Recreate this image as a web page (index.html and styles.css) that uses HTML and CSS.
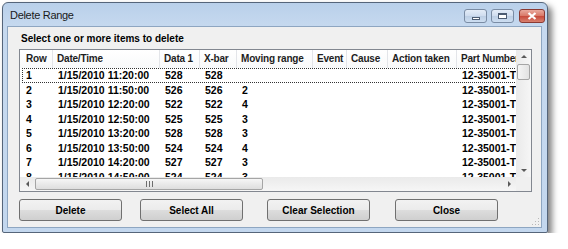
FILE: index.html
```html
<!DOCTYPE html>
<html>
  <head>
    <title>Delete Range</title>
    <link rel="stylesheet" href="styles.css">
  </head>

  <body>
    <div class="window">
      <div class="titlebar">
        <span class="title">Delete Range</span>
        <div class="caption-buttons">
          <div class="cap-btn cap-min"><span class="glyph-min"></span></div>
          <div class="cap-btn cap-max"><span class="glyph-max"></span></div>
          <div class="cap-btn cap-close">
            <svg width="10" height="8" viewBox="0 0 10 8">
              <path d="M1.5 1 L8.5 7 M8.5 1 L1.5 7" stroke="#fff" stroke-width="2.2" />
            </svg>
          </div>
        </div>
      </div>

      <div class="client">
        <span class="prompt">Select one or more items to delete</span>

        <div class="listview">
          <div class="list-main">
            <div class="list-header cols">
              <span>Row</span>
              <span>Date/Time</span>
              <span>Data 1</span>
              <span>X-bar</span>
              <span>Moving range</span>
              <span>Event</span>
              <span>Cause</span>
              <span>Action taken</span>
              <span>Part Number</span>
            </div>
            <div class="list-row cols focused">
              <span>1</span><span>1/15/2010 11:20:00</span><span>528</span><span>528</span><span></span><span></span><span></span><span></span><span>12-35001-T</span>
            </div>
            <div class="list-row cols">
              <span>2</span><span>1/15/2010 11:50:00</span><span>526</span><span>526</span><span>2</span><span></span><span></span><span></span><span>12-35001-T</span>
            </div>
            <div class="list-row cols">
              <span>3</span><span>1/15/2010 12:20:00</span><span>522</span><span>522</span><span>4</span><span></span><span></span><span></span><span>12-35001-T</span>
            </div>
            <div class="list-row cols">
              <span>4</span><span>1/15/2010 12:50:00</span><span>525</span><span>525</span><span>3</span><span></span><span></span><span></span><span>12-35001-T</span>
            </div>
            <div class="list-row cols">
              <span>5</span><span>1/15/2010 13:20:00</span><span>528</span><span>528</span><span>3</span><span></span><span></span><span></span><span>12-35001-T</span>
            </div>
            <div class="list-row cols">
              <span>6</span><span>1/15/2010 13:50:00</span><span>524</span><span>524</span><span>4</span><span></span><span></span><span></span><span>12-35001-T</span>
            </div>
            <div class="list-row cols">
              <span>7</span><span>1/15/2010 14:20:00</span><span>527</span><span>527</span><span>3</span><span></span><span></span><span></span><span>12-35001-T</span>
            </div>
            <div class="list-row cols">
              <span>8</span><span>1/15/2010 14:50:00</span><span>524</span><span>524</span><span>3</span><span></span><span></span><span></span><span>12-35001-T</span>
            </div>
          </div>

          <div class="vscroll">
            <div class="arrow arrow-up"></div>
            <div class="vthumb"></div>
            <div class="vtrack"></div>
            <div class="arrow arrow-down"></div>
          </div>

          <div class="hscroll">
            <div class="arrow arrow-left"></div>
            <div class="hthumb"><span class="grip-lines"></span></div>
            <div class="htrack"></div>
            <div class="arrow arrow-right"></div>
          </div>

          <div class="corner"></div>
        </div>

        <div class="buttons">
          <button class="btn">Delete</button>
          <button class="btn btn-select">Select All</button>
          <button class="btn btn-clear">Clear Selection</button>
          <button class="btn btn-close">Close</button>
        </div>

        <svg class="size-grip" width="10" height="10" viewBox="0 0 10 10">
          <rect x="8" y="2" width="1" height="1" fill="#b8b8b8" />
          <rect x="5" y="5" width="1" height="1" fill="#b8b8b8" />
          <rect x="8" y="5" width="1" height="1" fill="#b8b8b8" />
          <rect x="2" y="8" width="1" height="1" fill="#b8b8b8" />
          <rect x="5" y="8" width="1" height="1" fill="#b8b8b8" />
          <rect x="8" y="8" width="1" height="1" fill="#b8b8b8" />
        </svg>
      </div>
    </div>
  </body>
</html>
```

FILE: styles.css
```css
body {
  margin: 0;
  background: #fff;
  font-family: "Liberation Sans", Arial, sans-serif;
  color: #000;
}

.window {
  margin: 2px 0 0 2px;
  width: 546px;
  height: 231px;
  box-sizing: border-box;
  border: 1px solid #55657a;
  border-radius: 6px 6px 2px 2px;
  background: linear-gradient(#b9d0ea, #c6d9ef 24px, #c3d7ee);
  box-shadow: 4px 4px 6px rgba(0, 0, 0, 0.5);
  display: flex;
  flex-direction: column;
}

/* title bar */

.titlebar {
  height: 23px;
  display: flex;
  align-items: center;
  padding-left: 7px;
}

.title {
  font-size: 11px;
  letter-spacing: -0.3px;
  color: #1a1a1a;
  margin-top: 1px;
}

.caption-buttons {
  margin-left: auto;
  margin-right: 2px;
  align-self: flex-start;
  margin-top: 6px;
  display: flex;
  gap: 4px;
}

.cap-btn {
  width: 23px;
  height: 14px;
  box-sizing: border-box;
  border: 1px solid #7a8ca4;
  border-radius: 3px;
  background: linear-gradient(#e3ecf7, #cedcee 50%, #bccee4 51%, #cddef1);
  display: flex;
  align-items: center;
  justify-content: center;
}

.cap-close {
  width: 26px;
  margin-left: 1px;
  border-color: #8a3a33;
  background: linear-gradient(#e9a99d, #d87766 50%, #c7493a 51%, #d8816f);
}

.glyph-min {
  width: 8px;
  height: 3px;
  margin-top: 4px;
  background: #fff;
  border: 1px solid #4c5c72;
  box-sizing: border-box;
}

.glyph-max {
  width: 9px;
  height: 6px;
  border: 1px solid #4c5c72;
  box-sizing: border-box;
  border-top-width: 2px;
  background: #fff;
}

/* client area */

.client {
  position: relative;
  margin: 0 5px 4px 4px;
  flex: 1;
  background: #f0f0f0;
  border: 1px solid #8ea6c1;
  display: flex;
  flex-direction: column;
  align-items: flex-start;
}

.prompt {
  margin: 5px 0 0 13px;
  font-size: 10px;
  font-weight: bold;
  line-height: 14px;
}

/* list view */

.listview {
  margin: 3px 0 0 11px;
  width: 513px;
  height: 143px;
  box-sizing: border-box;
  border: 1px solid #828790;
  background: #fff;
  display: grid;
  grid-template-columns: 496px 15px;
  grid-template-rows: 127px 14px;
}

.list-main {
  overflow: hidden;
}

.cols {
  display: grid;
  grid-template-columns: 33px 107px 40px 37px 76px 34px 41px 69px 80px;
  width: 517px;
}

.cols span {
  white-space: nowrap;
  overflow: hidden;
  padding-left: 5px;
}

.list-header {
  height: 18px;
  background: linear-gradient(#fff, #f8f9fa);
  font-size: 10px;
  font-weight: bold;
  letter-spacing: -0.2px;
  line-height: 17px;
  color: #1e1e1e;
}

.list-header span {
  border-right: 1px solid #e3e5e9;
  padding-left: 4px;
}

.list-header span:first-child {
  padding-left: 6px;
}

.list-row {
  position: relative;
  height: 14.5px;
  font-size: 10.5px;
  font-weight: bold;
  line-height: 14.5px;
}

.list-row span:first-child {
  padding-left: 6px;
}

.focused::after {
  content: "";
  position: absolute;
  left: 2px;
  right: 0;
  top: 0;
  bottom: 0;
  border: 1px dotted #333;
}

/* scroll bars */

.vscroll {
  display: flex;
  flex-direction: column;
  background: linear-gradient(90deg, #eaeaea, #f6f6f6);
}

.vtrack {
  flex: 1;
}

.vthumb {
  height: 14px;
  margin: 0 1px;
  border: 1px solid #a5a5a5;
  border-radius: 2px;
  background: linear-gradient(90deg, #f5f5f5, #e2e2e2);
}

.hscroll {
  display: flex;
  align-items: stretch;
  background: linear-gradient(#eaeaea, #f6f6f6);
}

.htrack {
  flex: 1;
}

.hthumb {
  width: 226px;
  margin: 1px 0;
  border: 1px solid #a5a5a5;
  border-radius: 2px;
  background: linear-gradient(#f6f6f6, #dedede);
  display: flex;
  align-items: center;
  justify-content: center;
}

.grip-lines {
  width: 7px;
  height: 6px;
  background: repeating-linear-gradient(90deg, #6e6e6e 0 1px, transparent 1px 3px);
}

.corner {
  background: #f0f0f0;
}

.arrow {
  width: 15px;
  height: 14px;
  position: relative;
  flex-shrink: 0;
}

.arrow::before {
  content: "";
  position: absolute;
  left: 50%;
  top: 50%;
  width: 0;
  height: 0;
  border: 3px solid transparent;
}

.arrow-up::before {
  border-bottom-color: #5a5a5a;
  margin: -5px 0 0 -3px;
}

.arrow-down::before {
  border-top-color: #5a5a5a;
  margin: -1px 0 0 -3px;
}

.arrow-left::before {
  border-right-color: #5a5a5a;
  margin: -3px 0 0 -5px;
}

.arrow-right::before {
  border-left-color: #5a5a5a;
  margin: -3px 0 0 -1px;
}

/* push buttons */

.buttons {
  display: flex;
  margin: 7px 0 0 11px;
}

.btn {
  width: 103px;
  height: 22px;
  border: 1px solid #707070;
  border-radius: 3px;
  background: linear-gradient(#f2f2f2, #ebebeb 50%, #dddddd 51%, #cfcfcf);
  font-family: "Liberation Sans", Arial, sans-serif;
  font-size: 10px;
  font-weight: bold;
  color: #000;
  padding: 0;
}

.btn-select {
  margin-left: 18px;
}

.btn-clear {
  margin-left: 24px;
}

.btn-close {
  margin-left: 25px;
}

.size-grip {
  position: absolute;
  right: 1px;
  bottom: 1px;
}
```
